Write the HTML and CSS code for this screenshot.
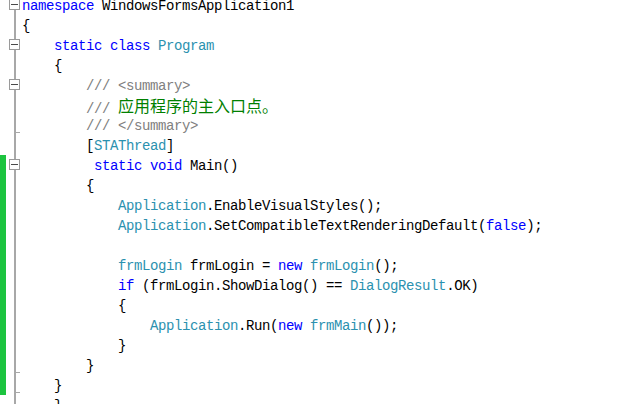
FILE: index.html
```html
<!DOCTYPE html>
<html lang="zh-CN">
<head>
  <meta charset="UTF-8" />
  <meta name="viewport" content="width=device-width, initial-scale=1.0" />
  <title>Program.cs</title>
  <link rel="stylesheet" href="styles.css">
</head>
<body>
  <div class="editor">
    <div class="line"><div class="mark"></div><div class="fold first"><div class="box"></div></div><pre class="code"><span class="kw">namespace</span> WindowsFormsApplication1</pre></div>
    <div class="line"><div class="mark"></div><div class="fold"></div><pre class="code">{</pre></div>
    <div class="line"><div class="mark"></div><div class="fold"><div class="box"></div></div><pre class="code">    <span class="kw">static</span> <span class="kw">class</span> <span class="type">Program</span></pre></div>
    <div class="line"><div class="mark"></div><div class="fold"></div><pre class="code">    {</pre></div>
    <div class="line"><div class="mark"></div><div class="fold"><div class="box"></div></div><pre class="code">        <span class="doc">/// &lt;summary&gt;</span></pre></div>
    <div class="line"><div class="mark"></div><div class="fold"></div><pre class="code">        <span class="doc">///</span> <span class="cmt">应用程序的主入口点。</span></pre></div>
    <div class="line"><div class="mark"></div><div class="fold end"></div><pre class="code">        <span class="doc">/// &lt;/summary&gt;</span></pre></div>
    <div class="line"><div class="mark"></div><div class="fold"></div><pre class="code">        [<span class="type">STAThread</span>]</pre></div>
    <div class="line"><div class="mark changed"></div><div class="fold"><div class="box"></div></div><pre class="code">         <span class="kw">static</span> <span class="kw">void</span> Main()</pre></div>
    <div class="line"><div class="mark changed"></div><div class="fold"></div><pre class="code">        {</pre></div>
    <div class="line"><div class="mark changed"></div><div class="fold"></div><pre class="code">            <span class="type">Application</span>.EnableVisualStyles();</pre></div>
    <div class="line"><div class="mark changed"></div><div class="fold"></div><pre class="code">            <span class="type">Application</span>.SetCompatibleTextRenderingDefault(<span class="kw">false</span>);</pre></div>
    <div class="line"><div class="mark changed"></div><div class="fold"></div><pre class="code"> </pre></div>
    <div class="line"><div class="mark changed"></div><div class="fold"></div><pre class="code">            <span class="type">frmLogin</span> frmLogin = <span class="kw">new</span> <span class="type">frmLogin</span>();</pre></div>
    <div class="line"><div class="mark changed"></div><div class="fold"></div><pre class="code">            <span class="kw">if</span> (frmLogin.ShowDialog() == <span class="type">DialogResult</span>.OK)</pre></div>
    <div class="line"><div class="mark changed"></div><div class="fold"></div><pre class="code">            {</pre></div>
    <div class="line"><div class="mark changed"></div><div class="fold"></div><pre class="code">                <span class="type">Application</span>.Run(<span class="kw">new</span> <span class="type">frmMain</span>());</pre></div>
    <div class="line"><div class="mark changed"></div><div class="fold"></div><pre class="code">            }</pre></div>
    <div class="line"><div class="mark changed"></div><div class="fold end"></div><pre class="code">        }</pre></div>
    <div class="line"><div class="mark changed"></div><div class="fold end"></div><pre class="code">    }</pre></div>
    <div class="line"><div class="mark"></div><div class="fold"></div><pre class="code">    }</pre></div>
  </div>
</body>
</html>
```

FILE: styles.css
```css
* {
  margin: 0;
  padding: 0;
  box-sizing: border-box;
}
body {
  background-color: #fff;
  color: #000;
  overflow: hidden;
}
.editor {
  margin-top: -5px;
}
.line {
  display: flex;
  height: 20px;
}
.mark {
  width: 6px;
  flex-shrink: 0;
}
.mark.changed {
  background-color: #1cc43f;
}
.fold {
  width: 11px;
  margin-left: 3px;
  margin-right: 2px;
  flex-shrink: 0;
  background: linear-gradient(#a8a8a8, #a8a8a8) no-repeat 5px 0 / 2px 100%;
}
.fold.first {
  background-position: 5px 15px;
}
.fold.end {
  background:
    linear-gradient(#a8a8a8, #a8a8a8) no-repeat 5px 17px / 6px 1px,
    linear-gradient(#a8a8a8, #a8a8a8) no-repeat 5px 0 / 2px 100%;
}
.box {
  width: 11px;
  height: 11px;
  margin-top: 4px;
  border: 1px solid #9a9a9a;
  background: #fff linear-gradient(#4a4a4a, #4a4a4a) no-repeat 1px 4px / 7px 1px;
}
.code {
  padding-top: 1px;
  font-family: "Liberation Mono", "Noto Sans CJK SC", monospace;
  font-size: 14px;
  letter-spacing: -0.4px;
  line-height: 20px;
  white-space: pre;
}
.kw {
  color: #0000ff;
}
.type {
  color: #2b91af;
}
.doc {
  color: #808080;
}
.cmt {
  color: #008000;
  font-family: "Noto Sans CJK SC", sans-serif;
  font-size: 16px;
  letter-spacing: 0;
  position: relative;
  top: -1px;
}
```
